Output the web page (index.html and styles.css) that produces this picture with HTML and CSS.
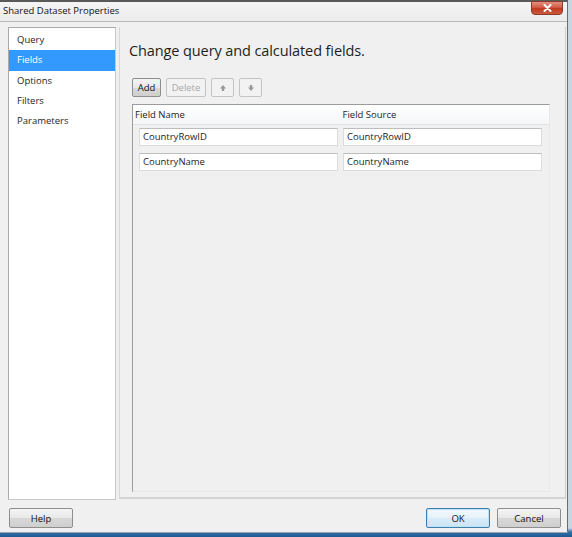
FILE: index.html
```html
<!DOCTYPE html>
<html>
<head>
<meta charset="utf-8">
<link rel="stylesheet" href="styles.css">
</head>
<body>
<div class="window">
  <div class="titlebar">
    <span class="title">Shared Dataset Properties</span>
    <span class="close"><svg width="9" height="8" viewBox="0 0 9 8"><path d="M1.5 1 L7.5 7 M7.5 1 L1.5 7" stroke="#fff" stroke-width="2" stroke-linecap="round"/></svg></span>
  </div>
  <div class="client">
    <div class="nav">
      <div class="nav-item">Query</div>
      <div class="nav-item selected">Fields</div>
      <div class="nav-item">Options</div>
      <div class="nav-item">Filters</div>
      <div class="nav-item">Parameters</div>
    </div>
    <div class="main">
      <h1 class="heading">Change query and calculated fields.</h1>
      <div class="toolbar">
        <button class="btn add">Add</button>
        <button class="btn disabled delete">Delete</button>
        <button class="btn disabled arrow"><svg width="8" height="8" viewBox="0 0 8 8"><path d="M4 1 L7 4.5 H5.2 V7 H2.8 V4.5 H1 Z" fill="#9a9a9a"/></svg></button>
        <button class="btn disabled arrow"><svg width="8" height="8" viewBox="0 0 8 8"><path d="M4 7 L7 3.5 H5.2 V1 H2.8 V3.5 H1 Z" fill="#9a9a9a"/></svg></button>
      </div>
      <div class="grid">
        <div class="grid-head">
          <div class="col">Field Name</div>
          <div class="col">Field Source</div>
        </div>
        <div class="grid-row">
          <div class="cell"><div class="textbox">CountryRowID</div></div>
          <div class="cell"><div class="textbox">CountryRowID</div></div>
        </div>
        <div class="grid-row">
          <div class="cell"><div class="textbox">CountryName</div></div>
          <div class="cell"><div class="textbox">CountryName</div></div>
        </div>
      </div>
    </div>
  </div>
  <div class="footer">
    <button class="btn big">Help</button>
    <div class="right-btns">
      <button class="btn big default">OK</button>
      <button class="btn big">Cancel</button>
    </div>
  </div>
</div>
</body>
</html>
```

FILE: styles.css
```css
* { box-sizing: border-box; }
html, body {
  margin: 0;
  padding: 0;
  width: 572px;
  height: 537px;
  overflow: hidden;
}
body {
  background: linear-gradient(to bottom, #c9d6e2 0, #c9d6e2 528px, #2f6fa8 532px, #1e5a92 537px);
  font-family: "Open Sans", "Noto Sans", "Liberation Sans", sans-serif;
  font-size: 9.5px;
  color: #1e1e1e;
}
.window {
  width: 568px;
  height: 533px;
  background: #f0f0f0;
  border-top: 2px solid #5a5a5a;
  border-right: 1px solid #6d6d6d;
  border-bottom: 1px solid #9aa4ae;
  display: flex;
  flex-direction: column;
}
.titlebar {
  height: 20px;
  display: flex;
  justify-content: space-between;
  align-items: flex-start;
  background: linear-gradient(to bottom, #f5f5f5, #ececec);
  border-bottom: 1px solid #b8b8b8;
  padding: 0 4px 0 3px;
}
.title {
  font-size: 9.5px;
  line-height: 18px;
  color: #111;
}
.close {
  width: 32px;
  height: 14px;
  margin-top: -1px;
  border-radius: 0 0 4px 4px;
  background: linear-gradient(to bottom, #e4907f 0%, #d25a43 45%, #bf3a20 55%, #cc5a3e 100%);
  border: 1px solid #8e3a2a;
  display: flex;
  align-items: center;
  justify-content: center;
}
.client {
  display: flex;
  gap: 3px;
  padding: 5px 1px 0 8px;
  height: 479px;
}
.nav {
  width: 108px;
  height: 473px;
  background: #fff;
  border: 1px solid #a9a9a9;
  border-right-color: #c8c8c8;
  border-bottom-color: #c8c8c8;
  padding-top: 2px;
}
.nav-item {
  height: 20.3px;
  line-height: 20px;
  padding-left: 8px;
}
.nav-item.selected {
  background: #3399ff;
  color: #fff;
}
.main {
  flex: 1;
  height: 472px;
  border-left: 1px solid #d8d8d8;
  border-right: 1px solid #cfcfcf;
  border-bottom: 2px solid #d4d4d4;
  padding: 0 14px 5px 12px;
  display: flex;
  flex-direction: column;
}
.heading {
  margin: 14px 0 0 -3px;
  font-size: 14.5px;
  font-weight: normal;
  color: #1e1e1e;
  line-height: 20px;
  letter-spacing: -0.1px;
}
.toolbar {
  display: flex;
  gap: 5px;
  margin-top: 17px;
  height: 19px;
}
.btn {
  font-family: inherit;
  font-size: 9.5px;
  color: #111;
  height: 19px;
  padding: 0;
  border: 1px solid #8e8e8e;
  border-radius: 2px;
  background: linear-gradient(to bottom, #f4f4f4 0%, #e8e8e8 50%, #d8d8d8 51%, #cfcfcf 100%);
  display: flex;
  align-items: center;
  justify-content: center;
}
.btn.add { width: 29px; }
.btn.delete { width: 40px; }
.btn.arrow { width: 23px; }
.btn.disabled {
  color: #a8a8a8;
  background: #f2f2f2;
  border-color: #c4c4c4;
}
.grid {
  flex: 1;
  margin-top: 7px;
  width: 418px;
  border: 1px solid #9c9c9c;
  border-right-color: #e8e8e8;
  border-bottom-color: #e6e6e6;
  background: #f0f0f0;
}
.grid-head {
  display: flex;
  height: 20px;
  background: linear-gradient(to bottom, #ffffff, #f4f6f8);
  border-bottom: 1px solid #e2e2e2;
}
.col {
  flex: 1;
  line-height: 19px;
  padding-left: 2px;
}
.col + .col { padding-left: 1px; }
.grid-row {
  display: flex;
  height: 25px;
  padding-top: 3px;
}
.cell {
  flex: 1;
  padding-left: 6px;
}
.cell + .cell { padding-left: 0; margin-left: -2px; }
.textbox {
  width: 199px;
  height: 18px;
  background: #fff;
  border: 1px solid #dcdcdc;
  border-top-color: #bdbdbd;
  line-height: 16px;
  padding-left: 3px;
}
.footer {
  display: flex;
  justify-content: space-between;
  padding: 7px 6px 0 9px;
}
.right-btns {
  display: flex;
  gap: 7px;
}
.btn.big {
  width: 64px;
  height: 20px;
}
.btn.default {
  border-color: #3c7fb1;
  box-shadow: inset 0 0 0 1px #bde2f6;
  background: linear-gradient(to bottom, #f2f8fc 0%, #e6f2fa 50%, #d8ebf7 51%, #cde5f5 100%);
}
```
